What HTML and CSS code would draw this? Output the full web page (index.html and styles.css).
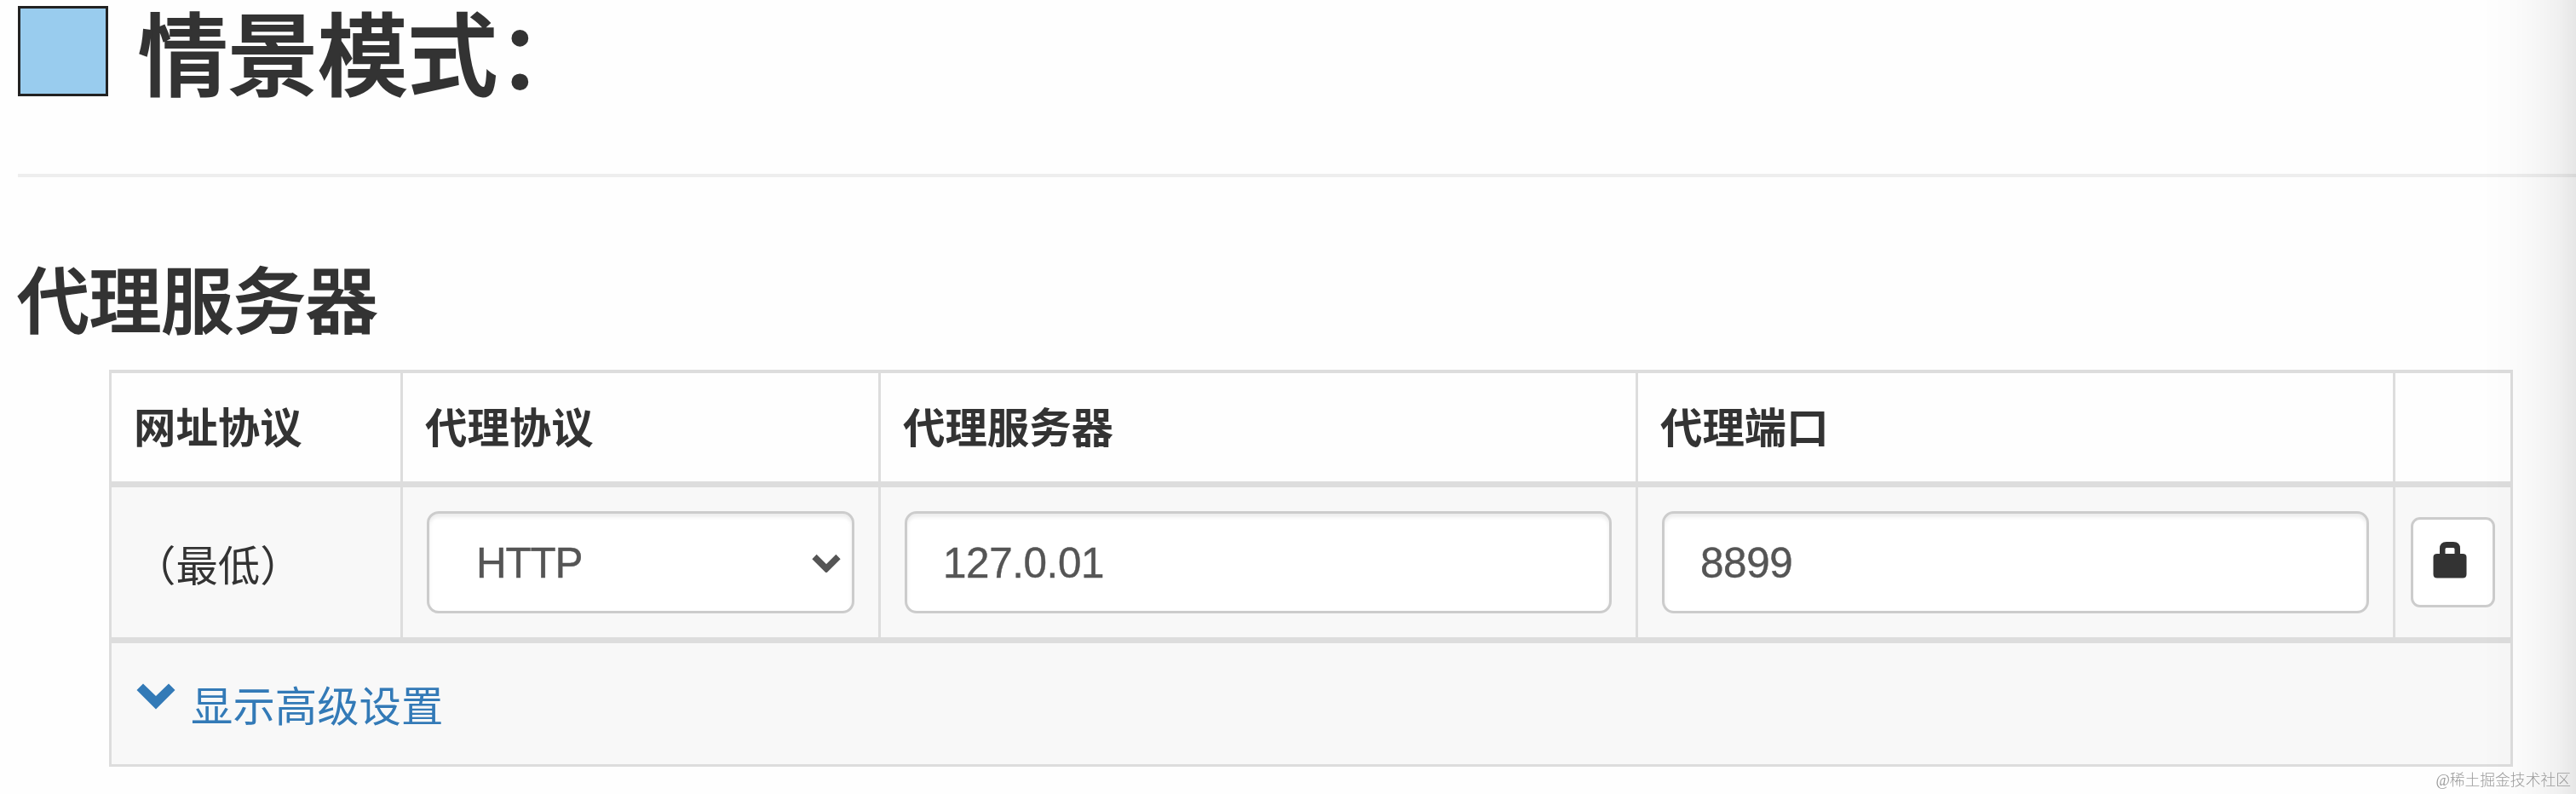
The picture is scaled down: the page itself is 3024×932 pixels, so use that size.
FILE: index.html
```html
<!DOCTYPE html>
<html lang="zh-CN">
<head>
    <meta charset="UTF-8">
    <meta name="viewport" content="width=device-width, initial-scale=1.0">
    <title>情景模式</title>
    <link rel="stylesheet" href="styles.css">
</head>
<body>
    <header class="page-header">
        <span class="profile-color"></span>
        <h1>情景模式：</h1>
    </header>

    <main>
        <h2>代理服务器</h2>
        <table class="fixed-servers">
            <colgroup>
                <col class="col-scheme">
                <col class="col-protocol">
                <col class="col-server">
                <col class="col-port">
                <col class="col-auth">
            </colgroup>
            <thead>
                <tr>
                    <th>网址协议</th>
                    <th>代理协议</th>
                    <th>代理服务器</th>
                    <th>代理端口</th>
                    <th></th>
                </tr>
            </thead>
            <tbody>
                <tr class="server-row">
                    <td class="scheme-cell">（最低）</td>
                    <td>
                        <div class="select-wrap">
                            <select class="form-control">
                                <option>HTTP</option>
                                <option>HTTPS</option>
                                <option>SOCKS4</option>
                                <option>SOCKS5</option>
                            </select>
                            <svg class="select-arrow" viewBox="0 0 34 22">
                                <path d="M3 3.5 L17 17.5 L31 3.5" fill="none" stroke="#555" stroke-width="7.5"/>
                            </svg>
                        </div>
                    </td>
                    <td><input type="text" class="form-control" value="127.0.01"></td>
                    <td><input type="text" class="form-control" value="8899"></td>
                    <td class="auth-cell">
                        <button type="button" class="btn-auth">
                            <svg class="icon-lock" viewBox="0 0 40 44">
                                <path fill="#333" fill-rule="evenodd" d="M8 15 V9 Q8 1 16 1 H24 Q32 1 32 9 V15 H35 Q39.500 15 39.500 19 V39 Q39.500 43.500 35 43.500 H5 Q.5 43.500 .5 39 V19 Q.5 15 5 15 Z M14.500 15 H25.500 V9.500 Q25.500 8 24 8 H16 Q14.500 8 14.500 9.500 Z"/>
                            </svg>
                        </button>
                    </td>
                </tr>
            </tbody>
            <tbody>
                <tr class="more-row">
                    <td colspan="5">
                        <a href="#" class="show-advanced">
                            <svg class="icon-chevron" viewBox="0 0 46 31">
                                <path fill="#337ab7" d="M8 .5 L23 15 L38 .5 L45.500 8 L23 30.500 L.5 8 Z"/>
                            </svg>
                            <span>显示高级设置</span>
                        </a>
                    </td>
                </tr>
            </tbody>
        </table>
    </main>

    <div class="edge-shadow"></div>
    <div class="watermark">@稀土掘金技术社区</div>
</body>
</html>
```

FILE: styles.css
```css
* {
    box-sizing: border-box;
}

body {
    margin: 0;
    height: 932px;
    overflow: hidden;
    background-color: #fefefe;
    color: #333;
    font-family: "Liberation Sans", "Noto Sans CJK SC", sans-serif;
    font-size: 49.4px;
}

.page-header {
    display: flex;
    gap: 35px;
    height: 208px;
    margin-left: 21px;
    padding-top: 7px;
    border-bottom: 4px solid #eee;
}

.profile-color {
    width: 106px;
    height: 106px;
    background-color: #99ccee;
    border: 3px solid #222;
}

h1, h2 {
    margin: 0;
    font-weight: 500;
}

h1 {
    font-size: 105.5px;
    line-height: 120px;
    -webkit-text-stroke: 2px #333;
}

h2 {
    margin: 96px 0 0 20px;
    height: 130px;
    font-size: 84.7px;
    line-height: 104px;
    -webkit-text-stroke: 1.5px #333;
}

.fixed-servers {
    width: 2822px;
    margin-left: 128px;
    table-layout: fixed;
    border-collapse: separate;
    border-spacing: 0;
    border-top: 4px solid #ddd;
    border-left: 3px solid #ddd;
}

.col-scheme {
    width: 342px;
}

.col-protocol {
    width: 561px;
}

.col-server, .col-port {
    width: 889px;
}

.col-auth {
    width: 138px;
}

th, td {
    padding: 0 28px;
    border-right: 3px solid #ddd;
    text-align: left;
    vertical-align: middle;
}

th {
    height: 134px;
    padding: 0 26px 7px;
    border-bottom: 7px solid #ddd;
    font-weight: bold;
}

td {
    background-color: #f8f8f8;
}

.server-row td {
    height: 183px;
    border-bottom: 7px solid #ddd;
}

.server-row .scheme-cell {
    padding-left: 26px;
}

.more-row td {
    height: 145px;
    padding-left: 27px;
    border-bottom: 3px solid #ddd;
}

.form-control {
    display: block;
    width: 100%;
    height: 120px;
    padding: 0 42px;
    background-color: #fff;
    border: 3px solid #ccc;
    border-radius: 14px;
    box-shadow: inset 0 4px 4px rgba(0, 0, 0, 0.075);
    color: #555;
    font-family: "Liberation Sans", sans-serif;
    font-size: 49.4px;
    letter-spacing: -0.4px;
    -webkit-text-stroke: 0.4px #555;
}

.select-wrap {
    position: relative;
}

select.form-control {
    appearance: none;
    padding-left: 55px;
    letter-spacing: -1.2px;
}

.select-arrow {
    position: absolute;
    top: 50px;
    right: 16px;
    width: 34px;
    height: 22px;
}

.auth-cell {
    padding: 0 18px;
}

.btn-auth {
    display: flex;
    align-items: center;
    width: 99px;
    height: 106px;
    padding: 0 0 6px 23px;
    background-color: #fff;
    border: 3px solid #ccc;
    border-radius: 11px;
}

.icon-lock {
    width: 40px;
    height: 44px;
}

.show-advanced {
    display: flex;
    gap: 18px;
    padding-top: 8px;
    color: #337ab7;
    line-height: 70px;
    text-decoration: none;
}

.icon-chevron {
    width: 46px;
    height: 31px;
    margin: 7px 0 0 2px;
}

/* shade along the right side of the window */
.edge-shadow {
    position: fixed;
    top: 0;
    right: 0;
    width: 110px;
    height: 100%;
    background: linear-gradient(to right, rgba(0, 0, 0, 0), rgba(0, 0, 0, 0.012) 35%, rgba(0, 0, 0, 0.032) 60%, rgba(0, 0, 0, 0.055) 82%, rgba(0, 0, 0, 0.095));
    pointer-events: none;
}

.watermark {
    position: fixed;
    right: 6px;
    bottom: 4px;
    color: #999;
    font-family: "Liberation Serif", "Noto Sans CJK SC", serif;
    font-size: 17.8px;
    font-weight: 300;
    line-height: 24px;
}
```
